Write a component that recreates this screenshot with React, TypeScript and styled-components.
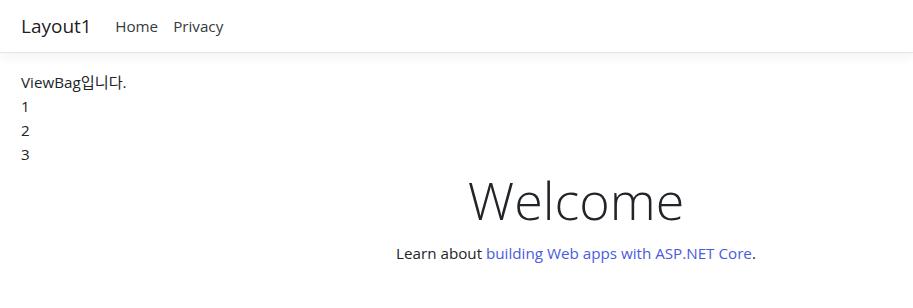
import React from "react";
import styled, { createGlobalStyle } from "styled-components";

const GlobalStyle = createGlobalStyle`
    html, body {
        margin: 0;
        padding: 0;
        background: #fff;
    }
    body {
        font-family: "Open Sans", "Noto Sans CJK KR", sans-serif;
        font-size: 15.2px;
        line-height: 24px;
        color: #212529;
    }
`;

const NavBar = styled.nav`
    display: flex;
    align-items: center;
    height: 52px;
    padding: 0 21px;
    background-color: #fff;
    border-bottom: 1px solid #e5e5e5;
    box-shadow: 0 4px 12px rgba(0, 0, 0, 0.05);
    margin-bottom: 17px;
`;

const Brand = styled.a`
    font-size: 19px;
    color: rgba(0, 0, 0, 0.9);
    text-decoration: none;
    margin-right: 16px;
`;

const NavList = styled.ul`
    display: flex;
    list-style: none;
    margin: 0;
    padding: 0;
`;

const NavLink = styled.a`
    display: block;
    padding: 8px 7.5px;
    color: #343a40;
    text-decoration: none;
`;

const Main = styled.main`
    padding: 0 20px 0 21px;
`;

const Line = styled.div`
    line-height: 24px;
`;

const Hero = styled.div`
    margin-left: 238px;
    text-align: center;
`;

const Title = styled.h1`
    font-size: 52px;
    font-weight: 300;
    line-height: 67px;
    margin: 0 0 8px;
`;

const Lead = styled.p`
    margin: 0;
`;

const Link = styled.a`
    color: #4a5be0;
    text-decoration: none;
`;

export default function App() {
    const items = [1, 2, 3];
    return (
        <>
            <GlobalStyle />
            <NavBar>
                <Brand href="#">Layout1</Brand>
                <NavList>
                    <li><NavLink href="#">Home</NavLink></li>
                    <li><NavLink href="#">Privacy</NavLink></li>
                </NavList>
            </NavBar>
            <Main>
                <Line>ViewBag입니다.</Line>
                {items.map((n) => (
                    <Line key={n}>{n}</Line>
                ))}
                <Hero>
                    <Title>Welcome</Title>
                    <Lead>
                        Learn about <Link href="#">building Web apps with ASP.NET Core</Link>.
                    </Lead>
                </Hero>
            </Main>
        </>
    );
}
